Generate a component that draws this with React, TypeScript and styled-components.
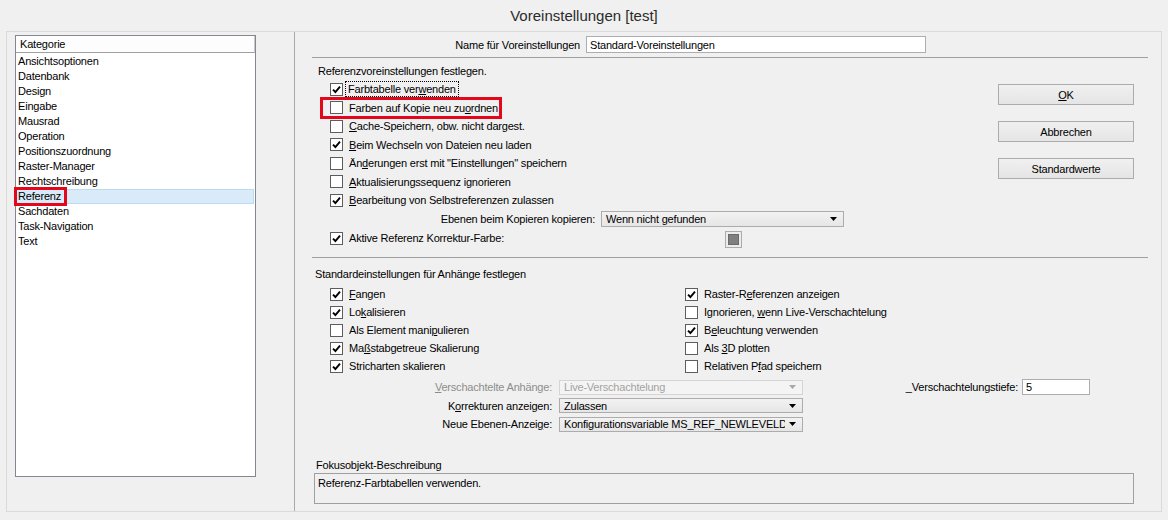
import React from 'react';
import styled, { createGlobalStyle } from 'styled-components';

const GlobalStyle = createGlobalStyle`
  html, body {
    margin: 0;
    padding: 0;
    background: #f0f0f0;
  }
  body {
    font-family: "Liberation Sans", Arial, sans-serif;
    font-size: 11px;
    letter-spacing: -0.2px;
    color: #000;
  }
  * {
    box-sizing: border-box;
  }
`;

const Window = styled.div`
  width: 1168px;
  height: 520px;
  display: flex;
  flex-direction: column;
  background: #f0f0f0;
  overflow: hidden;
`;

const TitleBar = styled.div`
  height: 31px;
  display: flex;
  align-items: center;
  justify-content: center;
  font-size: 15px;
  letter-spacing: 0;
  color: #2b2b2b;
`;

const Frame = styled.div`
  height: 481px;
  margin: 0 6px 0 6px;
  border: 1px solid #dadada;
  display: grid;
  grid-template-columns: 288px 1fr;
`;

const LeftPane = styled.div`
  border-right: 1px solid #a9a9a9;
  padding: 3px 0 0 8px;
`;

const ListBox = styled.div`
  width: 241px;
  height: 442px;
  border: 1px solid #828790;
  background: #fff;
`;

const ListHeader = styled.div`
  height: 17px;
  line-height: 16px;
  padding-left: 4px;
  background: #fdfdfd;
  border-bottom: 1px solid #a0a0a0;
  border-right: 1px solid #c8c8c8;
`;

const ListItems = styled.div`
  padding-top: 1px;
`;

const ListItem = styled.div<{ $selected?: boolean }>`
  position: relative;
  height: 15px;
  line-height: 15px;
  padding-left: 2px;
  margin-right: 1px;
  background: ${({ $selected }) => ($selected ? '#d9ebf9' : 'transparent')};
  box-shadow: ${({ $selected }) => ($selected ? 'inset 0 0 0 1px #b9dcf5' : 'none')};
`;

const Marker = styled.span<{ $w: number; $h: number; $x: number; $y: number }>`
  position: absolute;
  left: ${({ $x }) => $x}px;
  top: ${({ $y }) => $y}px;
  width: ${({ $w }) => $w}px;
  height: ${({ $h }) => $h}px;
  border: 3px solid #e2071b;
  pointer-events: none;
`;

const RightPane = styled.div`
  display: flex;
  flex-direction: column;
  padding: 4px 13px 0 17px;
`;

const NameRow = styled.div`
  display: flex;
  align-items: center;
  height: 17px;
`;

const RightLabel = styled.span<{ $w: number; $gap: number; $muted?: boolean }>`
  width: ${({ $w }) => $w}px;
  margin-right: ${({ $gap }) => $gap}px;
  text-align: right;
  white-space: nowrap;
  color: ${({ $muted }) => ($muted ? '#8d8d8d' : '#000')};
`;

const TextInput = styled.div<{ $w: number; $h: number }>`
  width: ${({ $w }) => $w}px;
  height: ${({ $h }) => $h}px;
  border: 1px solid #abadb3;
  background: #fff;
  padding-left: 3px;
  display: flex;
  align-items: center;
  white-space: nowrap;
`;

const Divider = styled.div<{ $top: number }>`
  height: 1px;
  margin-top: ${({ $top }) => $top}px;
  background: #a0a0a0;
`;

const Section = styled.div`
  display: flex;
`;

const Column = styled.div`
  flex: 1;
  display: flex;
  flex-direction: column;
`;

const Heading = styled.div<{ $indent: number; $top: number }>`
  height: 18px;
  line-height: 18px;
  margin-top: ${({ $top }) => $top}px;
  padding-left: ${({ $indent }) => $indent}px;
`;

const CheckRow = styled.div<{ $h: number }>`
  position: relative;
  display: flex;
  align-items: center;
  height: ${({ $h }) => $h}px;
  white-space: nowrap;
`;

const Indented = styled.div`
  padding-left: 18px;
`;

const Box = styled.span<{ $checked?: boolean }>`
  flex: none;
  width: 13px;
  height: 13px;
  border: 1px solid #5d5d5d;
  background: #fff;
  display: flex;
  align-items: center;
  justify-content: center;
`;

const CheckLabel = styled.span<{ $focus?: boolean }>`
  padding: 0 1px;
  outline: ${({ $focus }) => ($focus ? '1px dotted #000' : 'none')};
  outline-offset: 1px;
  margin-left: ${({ $focus }) => ($focus ? '4px' : '5px')};
`;

const Key = styled.span`
  text-decoration: underline;
  text-underline-offset: 1px;
`;

const ComboRow = styled.div<{ $h: number }>`
  display: flex;
  align-items: center;
  height: ${({ $h }) => $h}px;
  white-space: nowrap;
`;

const Combo = styled.div<{ $w: number; $h: number; $disabled?: boolean }>`
  width: ${({ $w }) => $w}px;
  height: ${({ $h }) => $h}px;
  display: flex;
  align-items: center;
  border: 1px solid ${({ $disabled }) => ($disabled ? '#d5d5d5' : '#acacac')};
  background: ${({ $disabled }) =>
    $disabled ? '#f4f4f4' : 'linear-gradient(#f2f2f2, #e6e6e6)'};
  color: ${({ $disabled }) => ($disabled ? '#a3a3a3' : '#000')};
`;

const ComboText = styled.span`
  flex: 1;
  overflow: hidden;
  white-space: nowrap;
  padding-left: 4px;
`;

const ComboArrow = styled.svg`
  flex: none;
  margin: 0 6px 0 4px;
`;

const ColorRow = styled.div`
  display: grid;
  grid-template-columns: 13px 1fr 17px;
  align-items: center;
  width: 412px;
  height: 18.5px;
`;

const Swatch = styled.span`
  width: 17px;
  height: 17px;
  margin-top: 3px;
  border: 1px solid #acacac;
  background: #ececec;
  display: flex;
  align-items: center;
  justify-content: center;
`;

const SwatchFill = styled.span`
  width: 11px;
  height: 11px;
  background: #7f7f7f;
  border: 1px solid #6a6a6a;
`;

const Buttons = styled.div`
  display: flex;
  flex-direction: column;
  gap: 16px;
  padding-top: 26px;
  margin-right: 14px;
`;

const Button = styled.div`
  width: 136px;
  height: 21px;
  display: flex;
  align-items: center;
  justify-content: center;
  border: 1px solid #acacac;
  background: linear-gradient(#f0f0f0, #e5e5e5);
`;

const CheckGrid = styled.div`
  display: grid;
  grid-template-columns: 355px 1fr;
  grid-auto-flow: column;
  grid-template-rows: repeat(5, 18px);
  margin-top: 2px;
  padding-left: 18px;
`;

const DropRows = styled.div`
  margin-top: 3px;
`;

const DepthGroup = styled.div`
  display: flex;
  align-items: center;
  margin-left: 101px;
`;

const FocusLabel = styled.div`
  height: 14px;
  line-height: 14px;
  margin-top: 24px;
  padding-left: 4px;
`;

const FocusBox = styled.div`
  width: 820px;
  height: 31px;
  margin: 1px 0 0 2px;
  border: 1px solid #a0a0a0;
  padding: 2px 3px;
  line-height: 14px;
`;

// "&" marks the mnemonic letter, as in a Windows resource string
function mnemonic(text: string) {
  const i = text.indexOf('&');
  if (i < 0) return text;
  return (
    <>
      {text.slice(0, i)}
      <Key>{text[i + 1]}</Key>
      {text.slice(i + 2)}
    </>
  );
}

function Tick() {
  return (
    <svg width="9" height="9" viewBox="0 0 9 9">
      <path d="M1 4.6 L3.4 7 L8 1.6" fill="none" stroke="#000" strokeWidth="1.9" />
    </svg>
  );
}

interface CheckProps {
  label: string;
  checked?: boolean;
  focus?: boolean;
  marked?: boolean;
  h?: number;
}

function Check({ label, checked, focus, marked, h = 18.5 }: CheckProps) {
  return (
    <CheckRow $h={h}>
      <Box $checked={checked}>{checked ? <Tick /> : null}</Box>
      <CheckLabel $focus={focus}>{mnemonic(label)}</CheckLabel>
      {marked ? <Marker $x={-10} $y={-2} $w={182} $h={22} /> : null}
    </CheckRow>
  );
}

function Arrow({ disabled }: { disabled?: boolean }) {
  return (
    <ComboArrow width="7" height="4" viewBox="0 0 7 4">
      <path d="M0 0 H7 L3.5 4 Z" fill={disabled ? '#a8a8a8' : '#000'} />
    </ComboArrow>
  );
}

const categories = [
  'Ansichtsoptionen',
  'Datenbank',
  'Design',
  'Eingabe',
  'Mausrad',
  'Operation',
  'Positionszuordnung',
  'Raster-Manager',
  'Rechtschreibung',
  'Referenz',
  'Sachdaten',
  'Task-Navigation',
  'Text',
];

const referenceOptions = [
  { label: 'Farbtabelle ver&wenden', checked: true, focus: true },
  { label: 'Farben auf Kopie neu zu&ordnen', checked: false, marked: true },
  { label: '&Cache-Speichern, obw. nicht dargest.', checked: false },
  { label: '&Beim Wechseln von Dateien neu laden', checked: true },
  { label: 'Än&derungen erst mit "Einstellungen" speichern', checked: false },
  { label: '&Aktualisierungssequenz ignorieren', checked: false },
  { label: '&Bearbeitung von Selbstreferenzen zulassen', checked: true },
];

const attachOptions = [
  { label: '&Fangen', checked: true },
  { label: 'Lo&kalisieren', checked: true },
  { label: 'Als Element mani&pulieren', checked: false },
  { label: 'Ma&ßstabgetreue Skalierung', checked: true },
  { label: 'Stricharten skalieren', checked: true },
  { label: 'Raster-R&eferenzen anzeigen', checked: true },
  { label: 'Ignorieren, &wenn Live-Verschachtelung', checked: false },
  { label: 'B&eleuchtung verwenden', checked: true },
  { label: 'Als &3D plotten', checked: false },
  { label: 'Relativen P&fad speichern', checked: false },
];

export default function App() {
  return (
    <Window>
      <GlobalStyle />
      <TitleBar>Voreinstellungen [test]</TitleBar>
      <Frame>
        <LeftPane>
          <ListBox>
            <ListHeader>Kategorie</ListHeader>
            <ListItems>
              {categories.map((name) => (
                <ListItem key={name} $selected={name === 'Referenz'}>
                  {name}
                  {name === 'Referenz' ? <Marker $x={-2} $y={-2} $w={53} $h={19} /> : null}
                </ListItem>
              ))}
            </ListItems>
          </ListBox>
        </LeftPane>

        <RightPane>
          <NameRow>
            <RightLabel $w={268} $gap={6}>Name für Voreinstellungen</RightLabel>
            <TextInput $w={340} $h={17}>Standard-Voreinstellungen</TextInput>
          </NameRow>
          <Divider $top={4} />

          <Section>
            <Column>
              <Heading $indent={6} $top={4}>Referenzvoreinstellungen festlegen.</Heading>
              <Indented>
                {referenceOptions.map((opt) => (
                  <Check key={opt.label} {...opt} />
                ))}
              </Indented>
              <ComboRow $h={18.5}>
                <RightLabel $w={283} $gap={6}>Ebenen beim Kopieren kopieren:</RightLabel>
                <Combo $w={243} $h={16}>
                  <ComboText>Wenn nicht gefunden</ComboText>
                  <Arrow />
                </Combo>
              </ComboRow>
              <Indented>
                <ColorRow>
                  <Box $checked>
                    <Tick />
                  </Box>
                  <CheckLabel>Aktive Referenz Korrektur-Farbe:</CheckLabel>
                  <Swatch>
                    <SwatchFill />
                  </Swatch>
                </ColorRow>
              </Indented>
            </Column>
            <Buttons>
              <Button>{mnemonic('&OK')}</Button>
              <Button>Abbrechen</Button>
              <Button>Standardwerte</Button>
            </Buttons>
          </Section>

          <Divider $top={10.5} />

          <Heading $indent={3} $top={7}>Standardeinstellungen für Anhänge festlegen</Heading>
          <CheckGrid>
            {attachOptions.map((opt) => (
              <Check key={opt.label} label={opt.label} checked={opt.checked} h={18} />
            ))}
          </CheckGrid>

          <DropRows>
            <ComboRow $h={18.5}>
              <RightLabel $w={240} $gap={7} $muted>
                {mnemonic('&Verschachtelte Anhänge:')}
              </RightLabel>
              <Combo $w={244} $h={15} $disabled>
                <ComboText>Live-Verschachtelung</ComboText>
                <Arrow disabled />
              </Combo>
              <DepthGroup>
                <RightLabel $w={114} $gap={4}>_Verschachtelungstiefe:</RightLabel>
                <TextInput $w={68} $h={16}>5</TextInput>
              </DepthGroup>
            </ComboRow>
            <ComboRow $h={18.5}>
              <RightLabel $w={240} $gap={7}>{mnemonic('K&orrekturen anzeigen:')}</RightLabel>
              <Combo $w={244} $h={15}>
                <ComboText>Zulassen</ComboText>
                <Arrow />
              </Combo>
            </ComboRow>
            <ComboRow $h={18.5}>
              <RightLabel $w={240} $gap={7}>{mnemonic('Neue Ebenen-Anzei&ge:')}</RightLabel>
              <Combo $w={244} $h={15}>
                <ComboText>Konfigurationsvariable MS_REF_NEWLEVELD</ComboText>
                <Arrow />
              </Combo>
            </ComboRow>
          </DropRows>

          <FocusLabel>Fokusobjekt-Beschreibung</FocusLabel>
          <FocusBox>Referenz-Farbtabellen verwenden.</FocusBox>
        </RightPane>
      </Frame>
    </Window>
  );
}
